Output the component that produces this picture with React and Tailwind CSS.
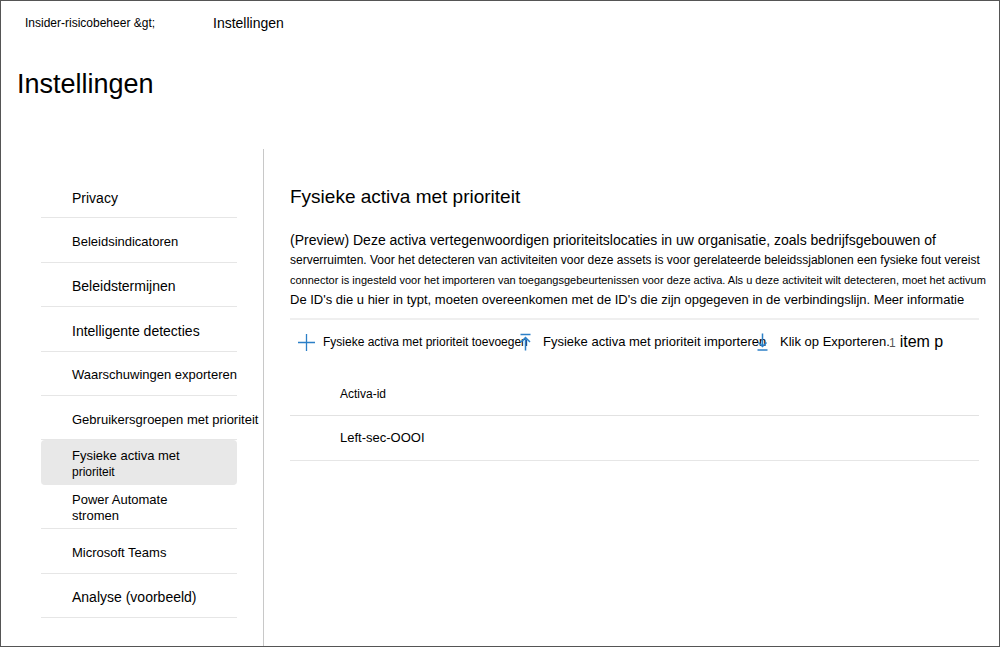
const navItems = [
  { lines: ["Privacy"], large: true },
  { lines: ["Beleidsindicatoren"] },
  { lines: ["Beleidstermijnen"], large: true },
  { lines: ["Intelligente detecties"], large: true },
  { lines: ["Waarschuwingen exporteren"] },
  { lines: ["Gebruikersgroepen met prioriteit"] },
  { lines: ["Fysieke activa met", "prioriteit"], active: true },
  { lines: ["Power Automate", "stromen"] },
  { lines: ["Microsoft Teams"] },
  { lines: ["Analyse (voorbeeld)"], large: true },
];

function PlusIcon() {
  return (
    <svg className="h-[17px] w-[17px] shrink-0" viewBox="0 0 17 17" fill="none" stroke="#2b7fc7" aria-hidden="true">
      <path d="M8.5 0v17M0 8.5h17" strokeWidth="1.3" />
    </svg>
  );
}

function ImportIcon() {
  return (
    <svg className="h-[18px] w-[11px] shrink-0" viewBox="0 0 11 18" fill="none" stroke="#2b7fc7" aria-hidden="true">
      <path d="M0.5 1.5h10" strokeWidth="1.5" />
      <path d="M5.5 17.5V5M1 9l4.5-4.5L10 9" strokeWidth="1.5" />
    </svg>
  );
}

function ExportIcon() {
  return (
    <svg className="h-[18px] w-[11px] shrink-0" viewBox="0 0 11 18" fill="none" stroke="#2b7fc7" aria-hidden="true">
      <path d="M0.5 17h10" strokeWidth="1.5" />
      <path d="M5.5 0.5V13M1.5 9.5l4 4 4-4" strokeWidth="1.5" />
    </svg>
  );
}

export default function App() {
  return (
    <div className="flex min-h-screen flex-col border border-[#555] bg-white font-['Liberation_Sans',Arial,sans-serif] text-[13px] text-black">
      <nav aria-label="Kruimelpad" className="flex items-center pt-3 pl-6 leading-5">
        <a href="#risico" className="w-[188px] text-[12px]">Insider-risicobeheer &amp;gt;</a>
        <a href="#instellingen" className="text-[14px]">Instellingen</a>
      </nav>
      <h1 className="mt-9 pl-4 text-[27px] leading-[30px]">Instellingen</h1>

      <div className="mt-[50px] flex flex-1">
        <nav aria-label="Instellingen" className="w-[263px] shrink-0 border-r border-[#c8c8c8] pt-[25px] pr-[26px] pb-6 pl-10">
          <ul className="grid min-h-[444px] auto-rows-fr grid-cols-1">
            {navItems.map((item) => (
              <li key={item.lines[0]}>
                <a
                  href={"#" + item.lines[0].toLowerCase().replace(/ /g, "-")}
                  aria-current={item.active ? "page" : undefined}
                  className={
                    item.active
                      ? "flex h-full w-full flex-col justify-center rounded-sm border-b border-[#e8e8e8] bg-[#e8e8e8] pt-1 pl-[31px] leading-4 whitespace-nowrap"
                      : "flex h-full w-full flex-col justify-center border-b border-[#e6e6e6] pt-1 pl-[31px] leading-4 whitespace-nowrap"
                  }
                >
                  {item.lines.map((line) => (
                    <span
                      key={line}
                      className={line === "prioriteit" ? "text-[12px]" : item.large ? "text-[14px]" : "text-[13px]"}
                    >
                      {line}
                    </span>
                  ))}
                </a>
              </li>
            ))}
          </ul>
        </nav>

        <main className="min-w-0 flex-1 pt-9 pr-5 pl-[26px]">
          <h2 className="text-[19px] leading-6">Fysieke activa met prioriteit</h2>
          <p className="mt-[21px] whitespace-nowrap leading-5">
            <span className="block text-[14px]">
              (Preview) Deze activa vertegenwoordigen prioriteitslocaties in uw organisatie, zoals bedrijfsgebouwen of
            </span>
            <span className="block text-[12px]">
              serverruimten. Voor het detecteren van activiteiten voor deze assets is voor gerelateerde beleidssjablonen een fysieke fout vereist
            </span>
            <span className="block text-[11px]">
              connector is ingesteld voor het importeren van toegangsgebeurtenissen voor deze activa. Als u deze activiteit wilt detecteren, moet het activum
            </span>
            <span className="block text-[13px]">
              De ID's die u hier in typt, moeten overeenkomen met de ID's die zijn opgegeven in de verbindingslijn.{" "}
              <a href="#meer">Meer informatie</a>
            </span>
          </p>

          <div className="mt-2 flex h-[46px] items-center border-t-2 border-[#efefef] pl-2 whitespace-nowrap">
            <button type="button" className="flex w-[222px] shrink-0 items-center gap-2 text-[12px]">
              <PlusIcon />
              Fysieke activa met prioriteit toevoegen
            </button>
            <button type="button" className="flex w-[237px] shrink-0 items-center gap-3 text-[13px]">
              <ImportIcon />
              Fysieke activa met prioriteit importeren
            </button>
            <button type="button" className="flex w-[132px] shrink-0 items-center gap-3 text-[13px]">
              <ExportIcon />
              Klik op Exporteren.
            </button>
            <span className="flex items-baseline gap-1 text-[16px]">
              <span className="text-[12px] text-[#555]">1</span>
              item p
            </span>
          </div>

          <table className="mt-[6px] w-full border-collapse text-left">
            <thead>
              <tr className="h-[45px] border-b border-[#e2e2e2]">
                <th scope="col" className="pt-1 pl-[50px] text-[12px] font-normal">Activa-id</th>
              </tr>
            </thead>
            <tbody>
              <tr className="h-[45px] border-b border-[#e6e6e6]">
                <td className="pl-[50px] text-[13px]">Left-sec-OOOI</td>
              </tr>
            </tbody>
          </table>
        </main>
      </div>
    </div>
  );
}
